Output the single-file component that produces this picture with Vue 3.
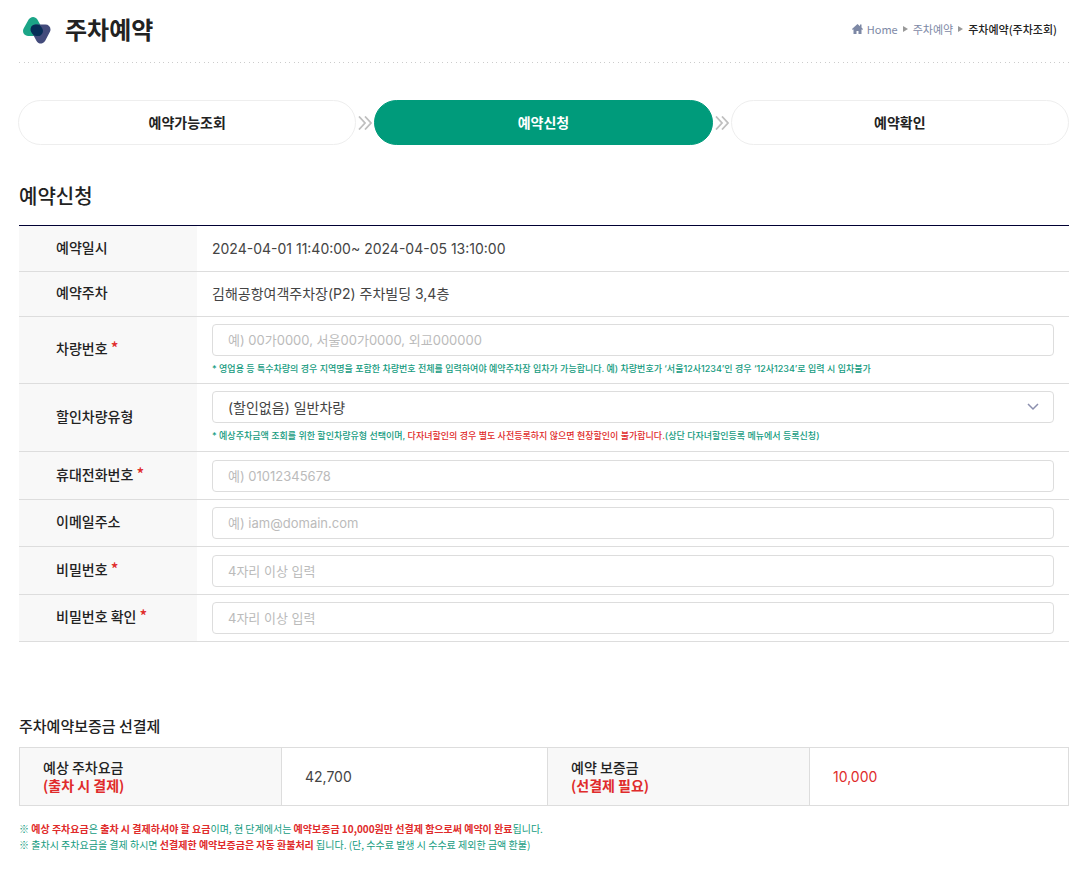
<script setup>
import { ref } from 'vue'

const steps = [
  { name: '예약가능조회', active: false },
  { name: '예약신청', active: true },
  { name: '예약확인', active: false },
]
const discount = ref('none')
</script>

<template>
  <div class="page">
    <header class="top">
      <h1 class="brand">
        <svg width="30" height="30" viewBox="0 0 30 30" stroke-width="10" stroke-linejoin="round" aria-hidden="true">
          <path d="M11 8 16 17H6Z" fill="#1ba587" stroke="#1ba587" />
          <path d="M14 15.500H23.500L18.800 24.500Z" fill="#434b7b" stroke="#434b7b" />
          <path d="M13.500 15.500H15L16 17H14.500Z" fill="#062e57" stroke="#062e57" />
        </svg>
        <span>주차예약</span>
      </h1>
      <nav class="crumbs" aria-label="현재 위치">
        <a href="#" class="crumb">
          <svg width="11" height="10" viewBox="0 0 11 10" aria-hidden="true">
            <path d="M5.500 0 0 5l.8.9L1.500 5.300V10H4.500V7h2v3h3V5.300l.7.600.8-.9-1.500-1.400V.5H8v1.700z" fill="#7d88a5" />
          </svg>
          Home
        </a>
        <i class="arrow"></i>
        <a href="#" class="crumb">주차예약</a>
        <i class="arrow"></i>
        <strong class="here">주차예약(주차조회)</strong>
      </nav>
    </header>

    <ol class="steps">
      <template v-for="(s, i) in steps" :key="s.name">
        <li v-if="i" class="sep" aria-hidden="true">
          <svg width="14" height="14" viewBox="0 0 14 14">
            <path d="M1 0.500 7 7l-6 6.500M7 0.500 13 7l-6 6.500" fill="none" stroke="#bfbfbf" stroke-width="1.800" />
          </svg>
        </li>
        <li class="step" :class="{ active: s.active }">{{ s.name }}</li>
      </template>
    </ol>

    <h2 class="title">예약신청</h2>
    <table class="form">
      <tbody>
        <tr class="text">
          <th scope="row">예약일시</th>
          <td>2024-04-01 11:40:00~ 2024-04-05 13:10:00</td>
        </tr>
        <tr class="text">
          <th scope="row">예약주차</th>
          <td>김해공항여객주차장(P2) 주차빌딩 3,4층</td>
        </tr>
        <tr class="noted">
          <th scope="row"><label for="car">차량번호 <em>*</em></label></th>
          <td>
            <input id="car" type="text" placeholder="예) 00가0000, 서울00가0000, 외교000000" />
            <p class="hint">* 영업용 등 특수차량의 경우 지역명을 포함한 차량번호 전체를 입력하여야 예약주차장 입차가 가능합니다. 예) 차량번호가 ‘서울12사1234’인 경우 ‘12사1234’로 입력 시 입차불가</p>
          </td>
        </tr>
        <tr class="noted">
          <th scope="row"><label for="discount">할인차량유형</label></th>
          <td>
            <div class="select">
              <select id="discount" v-model="discount">
                <option value="none">(할인없음) 일반차량</option>
              </select>
              <svg class="chevron" width="12" height="8" viewBox="0 0 12 8" aria-hidden="true">
                <path d="M1 1l5 5 5-5" fill="none" stroke="#8b8fae" stroke-width="1.500" />
              </svg>
            </div>
            <p class="hint">* 예상주차금액 조회를 위한 할인차량유형 선택이며, <span class="red">다자녀할인의 경우 별도 사전등록하지 않으면 현장할인이 불가합니다.</span>(상단 다자녀할인등록 메뉴에서 등록신청)</p>
          </td>
        </tr>
        <tr class="field">
          <th scope="row"><label for="phone">휴대전화번호 <em>*</em></label></th>
          <td><input id="phone" type="tel" placeholder="예) 01012345678" /></td>
        </tr>
        <tr class="field">
          <th scope="row"><label for="email">이메일주소</label></th>
          <td><input id="email" type="email" placeholder="예) iam@domain.com" /></td>
        </tr>
        <tr class="field">
          <th scope="row"><label for="pw">비밀번호 <em>*</em></label></th>
          <td><input id="pw" type="password" placeholder="4자리 이상 입력" /></td>
        </tr>
        <tr class="field">
          <th scope="row"><label for="pw2">비밀번호 확인 <em>*</em></label></th>
          <td><input id="pw2" type="password" placeholder="4자리 이상 입력" /></td>
        </tr>
      </tbody>
    </table>

    <h3 class="subtitle">주차예약보증금 선결제</h3>
    <table class="pay">
      <tbody>
        <tr>
          <th scope="row">예상 주차요금<b>(출차 시 결제)</b></th>
          <td class="fee">42,700</td>
          <th scope="row">예약 보증금<b>(선결제 필요)</b></th>
          <td class="red">10,000</td>
        </tr>
      </tbody>
    </table>
    <div class="notes">
      <p>※ <b>예상 주차요금</b>은 <b>출차 시 결제하셔야 할 요금</b>이며, 현 단계에서는 <b>예약보증금 10,000원만 선결제 함으로써 예약이 완료</b>됩니다.</p>
      <p>※ 출차시 주차요금을 결제 하시면 <b>선결제한 예약보증금은 자동 환불처리</b> 됩니다. (단, 수수료 발생 시 수수료 제외한 금액 환불)</p>
    </div>
  </div>
</template>

<style>
body {
  margin: 0;
  background: #fff;
}
</style>

<style scoped>
.page {
  box-sizing: border-box;
  padding: 0 13px 20px 19px;
  font-family: "Noto Sans CJK KR", sans-serif;
  font-size: 14px;
  line-height: 20px;
  color: #222;
}
.page * {
  box-sizing: border-box;
}
.top {
  display: flex;
  justify-content: space-between;
  align-items: center;
  height: 63px;
  padding: 0 12px 6px 3px;
  background: repeating-linear-gradient(90deg, #ccc 0 1px, transparent 1px 5px, #ccc 5px 6px, transparent 6px 9px) bottom / 100% 1px no-repeat;
}
.brand {
  display: flex;
  align-items: center;
  gap: 13px;
  margin: 0;
  font-size: 24px;
  line-height: 32px;
  font-weight: 700;
}
.crumbs {
  display: flex;
  align-items: center;
  gap: 5px;
  font-size: 11px;
}
.crumb {
  display: flex;
  align-items: center;
  gap: 4px;
  color: #7d88a5;
  text-decoration: none;
}
.arrow {
  border: 3px solid transparent;
  border-left: 5px solid #999;
  border-right: 0;
}
.here {
  font-weight: 500;
}
.steps {
  display: flex;
  align-items: center;
  margin: 37px 0 0 -1px;
  padding: 0;
  list-style: none;
}
.step {
  flex: 1;
  height: 45px;
  border: 1px solid #eee;
  border-radius: 23px;
  font-weight: 700;
  line-height: 42px;
  text-align: center;
}
.step.active {
  border-color: #009b7b;
  background: #009b7b;
  color: #fff;
}
.sep {
  display: flex;
  justify-content: center;
  width: 18px;
}
.title {
  margin: 37px 0 0;
  font-size: 20px;
  line-height: 28px;
  font-weight: 500;
}
.form {
  width: 100%;
  margin-top: 15px;
  border-top: 1px solid #000033;
  border-spacing: 0;
}
.form th,
.form td {
  padding: 0 15px;
  border-bottom: 1px solid #ddd;
  text-align: left;
}
.form th {
  width: 178px;
  padding: 0 0 4px 37px;
  background: #f8f8f8;
  font-weight: 500;
}
td {
  font-family: Inter, "Noto Sans CJK KR", sans-serif;
  color: #444;
}
.text {
  height: 45px;
}
.text:nth-child(odd) {
  height: 46px;
}
.noted {
  height: 68px;
}
.noted:nth-child(odd) {
  height: 67px;
}
.field {
  height: 47px;
}
.field:nth-child(odd) {
  height: 48px;
}
em {
  color: #e02b2b;
  font-style: normal;
  font-size: 16px;
  line-height: 16px;
}
input,
select {
  display: block;
  width: 100%;
  height: 32px;
  margin: 0;
  padding: 0 15px;
  border: 1px solid #ddd;
  border-radius: 4px;
  background: #fff;
  color: #444;
  font-family: inherit;
  font-size: 13px;
}
select {
  appearance: none;
  font-size: 14px;
}
input::placeholder {
  color: #bbb;
  opacity: 1;
}
.select {
  position: relative;
}
.chevron {
  position: absolute;
  right: 15px;
  top: 12px;
}
.hint {
  margin: 5px 0 0;
  color: #149b7e;
  font-size: 9px;
  line-height: 16px;
  font-weight: 500;
}
.form .red,
.pay .red {
  color: #e02b2b;
}
.subtitle {
  margin: 74px 0 0;
  font-size: 15px;
  line-height: 20px;
  font-weight: 500;
}
.pay {
  width: 100%;
  height: 59px;
  margin-top: 11px;
  border: 1px solid #ddd;
  border-spacing: 0;
  table-layout: fixed;
}
.pay th,
.pay td {
  padding: 0 23px;
  border-right: 1px solid #ddd;
  text-align: left;
}
.pay .fee {
  width: 266px;
}
.pay td:last-child {
  border-right: 0;
}
.pay th {
  width: 25%;
  padding-bottom: 2px;
  background: #f8f8f8;
  font-weight: 500;
  line-height: 18px;
}
.pay th b {
  display: block;
  color: #e02b2b;
}
.notes {
  margin-top: 15px;
  color: #149b7e;
  font-size: 10px;
  line-height: 16px;
}
.notes p {
  margin: 0;
}
.notes b {
  color: #e02b2b;
}
</style>
